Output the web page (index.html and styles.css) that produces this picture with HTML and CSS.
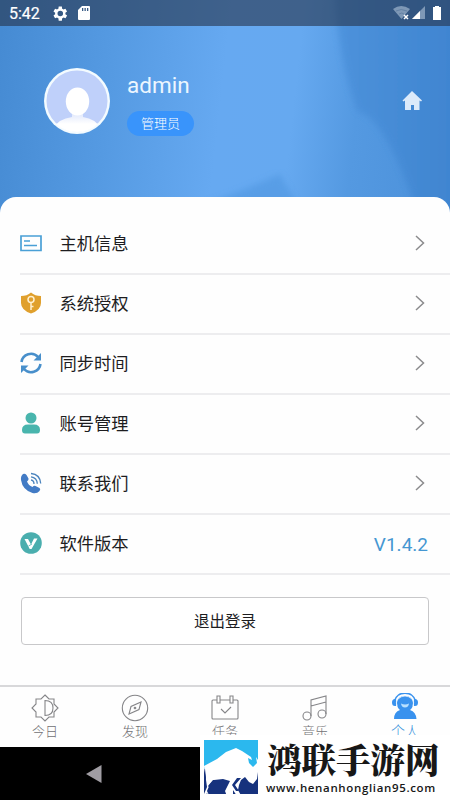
FILE: index.html
```
<!DOCTYPE html>
<html lang="zh-CN">
<head>
<meta charset="utf-8">
<title>个人</title>
<link rel="stylesheet" href="styles.css">
</head>
<body>
<div class="screen">
  <header class="hero">
    <svg class="hero-bg" viewBox="0 0 450 220" preserveAspectRatio="none">
      <defs>
        <linearGradient id="sky" gradientUnits="userSpaceOnUse" x1="0" y1="40" x2="450" y2="90"><stop offset="0" stop-color="#468bd3"/><stop offset=".25" stop-color="#559ae2"/><stop offset=".5" stop-color="#66a9f1"/><stop offset=".66" stop-color="#66a9f0"/><stop offset=".8" stop-color="#5499e1"/><stop offset="1" stop-color="#4c91da"/></linearGradient>
        <linearGradient id="wave" x1="0" x2="1"><stop offset="0" stop-color="#4a90da"/><stop offset="1" stop-color="#3c81cd"/></linearGradient>
        <filter id="soft"><feGaussianBlur stdDeviation="3"/></filter>
      </defs>
      <path fill="url(#sky)" d="M0 0h450v220H0z"/>
      <path filter="url(#soft)" fill="url(#wave)" opacity=".8" d="M335 -10Q339 65 358 112Q385 115 420 220H470V-10z"/>
      <path filter="url(#soft)" fill="#4f96e0" opacity=".6" d="M205 204Q250 188 280 174L306 220H205z"/>
    </svg>
    <div class="status">
      <span class="clock">5:42</span>
      <svg class="gear" viewBox="0 0 24 24"><path fill="#fff" fill-rule="evenodd" d="M19.400 13a7.800 7.800 0 0 0 0-2l2.100-1.600-2-3.500-2.500 1a7.500 7.500 0 0 0-1.700-1L15 3h-4l-.4 2.900a7.500 7.500 0 0 0-1.700 1l-2.500-1-2 3.500L6.500 11a7.800 7.800 0 0 0 0 2l-2.100 1.600 2 3.500 2.500-1a7.500 7.500 0 0 0 1.700 1L11 21h4l.4-2.900a7.500 7.500 0 0 0 1.700-1l2.500 1 2-3.500zM13 15.500a3.500 3.500 0 1 1 0-7 3.500 3.500 0 0 1 0 7z"/></svg>
      <svg class="sd" viewBox="0 0 12 14"><path fill="#fff" fill-rule="evenodd" d="M4 0h7q1 0 1 1v12q0 1-1 1H1q-1 0-1-1V4zM4 2v3h1.300V2zm2.500 0v3h1.300V2zM9 2v3h1.300V2z"/></svg>
      <svg class="signals" viewBox="0 0 50 16">
        <path fill="#7e98b6" d="M0 4Q8-2 17 4L8.500 14z"/><path stroke="#6482a5" fill="none" d="M3 6q5-3 11 0M6 9q3-2 5 0"/>
        <path stroke="#fff" stroke-width="1.500" d="M11 10l4 4m0-4l-4 4"/>
        <path fill="#7e98b6" d="M32 1v13H19z"/><path fill="#fff" d="M27 6v8h-8z"/>
        <path fill="#fff" d="M40 2h2V1h4v1h2v13h-8z"/>
      </svg>
    </div>
    <div class="profile">
      <svg class="avatar" viewBox="0 0 66 66">
        <defs><clipPath id="face"><circle cx="33" cy="33" r="31"/></clipPath><linearGradient id="body" x2="0" y2="1"><stop stop-color="#dce4fb"/><stop offset=".5" stop-color="#fff"/></linearGradient></defs>
        <circle cx="33" cy="33" r="33" fill="#f3fbff"/><circle cx="33" cy="33" r="30.500" fill="#bfd0fa"/>
        <g clip-path="url(#face)"><path fill="url(#body)" d="M28 44h11v5q13 2 17 11v8H10v-8q4-9 18-11z"/><ellipse cx="33.500" cy="33.500" rx="11.700" ry="14" fill="#fff"/></g>
      </svg>
      <div class="identity"><div class="name">admin</div><div class="role">管理员</div></div>
      <svg class="home" viewBox="0 0 20 20"><path fill="#dceafa" d="M10 0l10 9.500-1 1-1.500-1V19H12v-5H9v5H3V9.500l-1.500 1-1-1z"/></svg>
    </div>
  </header>

  <main class="card">
    <ul class="menu">
      <li><svg class="icon" viewBox="0 0 22 22"><path fill="none" stroke="#4aa0d6" stroke-width="1.700" d="M1 4h20v14.500H1zM4 9h6M4 13.500h13"/></svg><span>主机信息</span><svg class="arrow" viewBox="0 0 10 16"><path d="M1 1l7.500 7L1 15"/></svg></li>
      <li><svg class="icon" viewBox="0 0 22 22"><path fill="#e0a02d" d="M11 .5Q15 4 21 4v7q0 7-10 10.500Q1 18 1 11V4Q7 4 11 .5z"/><circle cx="11" cy="7.500" r="3" fill="none" stroke="#fff0d0" stroke-width="1.500"/><path fill="none" stroke="#fff0d0" stroke-width="1.500" d="M11 10.500V18M11 14.500h2.500"/></svg><span>系统授权</span><svg class="arrow" viewBox="0 0 10 16"><path d="M1 1l7.500 7L1 15"/></svg></li>
      <li><svg class="icon" viewBox="0 0 22 22"><g fill="none" stroke="#488fcb" stroke-width="2.600"><path d="M1.500 10A9.500 9.500 0 0 1 18 5"/><path d="M20.500 12A9.500 9.500 0 0 1 4 17"/></g><path fill="#488fcb" d="M21 1v7.500h-7.500zM1 21v-7.500h7.500z"/></svg><span>同步时间</span><svg class="arrow" viewBox="0 0 10 16"><path d="M1 1l7.500 7L1 15"/></svg></li>
      <li><svg class="icon" viewBox="0 0 22 22"><g fill="#49b5ad"><circle cx="11" cy="6" r="5.500"/><path d="M8 12.500h6q6 0 6 5.500 0 3.500-3 3.500H5q-3 0-3-3.500 0-5.500 6-5.500z"/></g></svg><span>账号管理</span><svg class="arrow" viewBox="0 0 10 16"><path d="M1 1l7.500 7L1 15"/></svg></li>
      <li><svg class="icon" viewBox="0 0 22 22"><path fill="#427bc5" d="M3 2Q5 1 6.500 3l2 3.500Q9 8 7 9.500q1.500 4 5.500 5.500 1.500-1.800 3-1l4 2q1.500 1 0 3-2.500 3-7 2Q2.500 18 1 8 .5 4 3 2z"/><path fill="none" stroke="#4a83bd" stroke-width="1.300" d="M11 8q3 .5 3 4M11 4.800q6 .7 6.300 7M11 1.500q9 .8 9.700 10"/></svg><span>联系我们</span><svg class="arrow" viewBox="0 0 10 16"><path d="M1 1l7.500 7L1 15"/></svg></li>
      <li><svg class="icon" viewBox="0 0 22 22"><circle cx="11" cy="11" r="10.800" fill="#4aaeae"/><path fill="#fff" d="M4.500 7H8l3 5.500L14 6.500h3.500L11.500 17H9.700z"/><path stroke="#4aaeae" stroke-width=".8" d="M8.500 14l3.500-2"/></svg><span>软件版本</span><b class="version">V1.4.2</b></li>
    </ul>
    <button class="logout">退出登录</button>
  </main>

  <nav class="tabs">
    <div class="tab"><svg viewBox="0 0 28 28"><path d="M14 1l4 4h5v5l4 4-4 4v5h-5l-4 4-4-4H5v-5l-4-4 4-4V5h5zM14 6.500q8 0 8 7.500t-8 7.500z"/></svg><span>今日</span></div>
    <div class="tab"><svg viewBox="0 0 28 28"><circle cx="14" cy="14" r="12.700"/><path d="M20 8l-2 7.500L8 20l2-7.500z"/><circle cx="14" cy="14" r=".8"/></svg><span>发现</span></div>
    <div class="tab"><svg viewBox="0 0 28 28"><path d="M6 6H2q-1 0-1 1v17q0 1 1 1h24q1 0 1-1V7q0-1-1-1h-4M9 6h10M6 2h3v7H6zM19 2h3v7h-3zM10 15l4 4 6-6"/></svg><span>任务</span></div>
    <div class="tab"><svg viewBox="0 0 28 28"><circle cx="6" cy="22" r="4"/><circle cx="21" cy="20" r="4"/><path d="M10 22V6l15-4v18M10 12l15-4"/></svg><span>音乐</span></div>
    <div class="tab active"><svg viewBox="0 0 28 28"><path class="fill" d="M14 3c5 0 8 3 8 7.500q0 4-3 6.500 6 2 6.500 9H3Q3 19 9 17q-3-2.500-3-6.500C6 6 9 3 14 3z"/><path class="band" d="M3.500 8C6-2.500 22-2.500 24.500 8"/><path class="fill" d="M5 6H4Q1 6 1 9.500T4 13h1zM23 6h1q3 0 3 3.500T24 13h-1z"/><path class="gap" d="M6 6Q4.800 9 6 13M22 6q1.200 3 0 7M7 6q7-6 14 0"/><path class="smile" d="M10 10.500q4 2 8 0-.5 4-4 4t-4-4z"/></svg><span>个人</span></div>
  </nav>

  <div class="system"><svg viewBox="0 0 16 18"><path fill="#a09da3" d="M0 9L15.500 0v18z"/></svg></div>

  <div class="watermark">
    <svg class="bison" viewBox="0 0 54 54">
      <path fill="#2bb8ee" d="M0 0h54v31H0z"/><path fill="#16327d" d="M0 29h54v25H0z"/>
      <path fill="#fff" d="M0 26L13 19 22 12 32 8l6 3 6 4 3 2 1 3-4-2 1 5 4 4 4-4-1-6 2 3v12l-1 7-4 5-4-2-4-5-4 3-2 5-1 5 5 9h-4l-6-9v9h-5l-3-8 5-10-7-2-9 1-4 4-3 7 4 8H6l-3-6-2 4-1-3 3-7z"/>
      <path fill="#16327d" d="M1 29l1 9-2 8zM13 40l-6 6 4 5H8l-4-5 5-6zM37 38l-6 7 4 6h-3l-4-6 5-7z"/>
    </svg>
    <div class="brand"><strong>鸿联手游网</strong><span>www.henanhonglian95.com</span></div>
  </div>
</div>
</body>
</html>
```
FILE: styles.css
```
* { box-sizing: border-box; }
body { margin: 0; font-family: Roboto, "Noto Sans CJK SC", sans-serif; color: #1d1d1f; }
svg { display: block; flex: none; }
.screen { position: relative; width: 450px; height: 800px; overflow: hidden; display: flex; flex-direction: column; background: #fefefe; }

.hero { position: relative; height: 197px; flex: none; }
.hero-bg { position: absolute; top: 0; left: 0; width: 450px; height: 220px; }
.status { position: relative; height: 26px; padding-left: 9px; display: flex; align-items: center; background: rgba(38, 54, 78, .62); }
.clock { width: 41px; font-size: 16px; font-weight: 400; line-height: 26px; padding-top: 2px; color: #fff; -webkit-text-stroke: .2px #fff; }
.gear { width: 19px; height: 19px; margin-right: 9px; }
.sd { width: 12px; height: 14px; }
.status .signals { width: 50px; height: 16px; margin: -1px 7px 0 auto; }
.profile { position: relative; display: flex; padding: 42px 28px 0 44px; }
.avatar { width: 66px; height: 66px; }
.identity { margin-left: 17px; padding-top: 3px; }
.name { font-size: 22.500px; line-height: 28px; color: #ecf6ff; font-weight: 400; }
.role { width: 67px; height: 25px; margin-top: 12px; border-radius: 13px; background: #3994fb; color: #fff; font-size: 13px; font-weight: 300; line-height: 25px; text-align: center; }
.home { width: 20px; height: 20px; margin: 23px 0 0 auto; }

.card { position: relative; height: 488px; flex: none; padding: 18px 0 0 20px; border-radius: 16px 16px 0 0; background: #fefefe; }
.menu { list-style: none; margin: 0; padding: 0; }
.menu li { display: flex; align-items: center; height: 60px; padding: 0 25px 2px 0; border-bottom: 2px solid #ededef; font-size: 17.300px; }
.menu li span { margin-top: -1px; }
.icon { width: 22px; height: 22px; margin-right: 17.500px; }
.arrow { width: 10px; height: 16px; margin-left: auto; fill: none; stroke: #8b8b8d; stroke-width: 1.500; }
.version { margin: 2px -3px 0 auto; font-size: 19px; font-weight: 400; color: #4597d2; }
.logout { display: block; width: 408px; height: 48px; margin: 22px 0 0 1px; padding: 0 0 2px; border: 1px solid #c8c8ca; border-radius: 4px; background: #fff; font: 15.500px "Noto Sans CJK SC", sans-serif; color: #1d1d1f; }

.tabs { display: grid; grid-template-columns: repeat(5, 1fr); height: 62px; flex: none; border-top: 2px solid #d8d8da; background: #fefefe; }
.tab { display: flex; flex-direction: column; align-items: center; padding-top: 7px; color: #707073; font-size: 13px; font-weight: 300; line-height: 20px; }
.tab svg { width: 28px; height: 28px; fill: none; stroke: #858588; stroke-width: 1.100; }
.tab.active { color: #3b94dc; font-size: 14px; padding-top: 6px; }
.tab.active svg { stroke: none; }
.tab .fill { fill: #3992ee; }
.tab .band { fill: none; stroke: #3992ee; stroke-width: 1.600; }
.tab .gap { fill: none; stroke: #d7ecff; stroke-width: .8; }
.tab .smile { fill: #b8e0ff; }
.system { flex: 1; display: flex; align-items: center; padding-left: 86px; background: #000; }
.system svg { width: 16px; height: 18px; }

.watermark { position: absolute; left: 200px; top: 735px; width: 250px; height: 65px; display: flex; padding: 5px 0 0 4px; background: #fff; }
.bison { width: 54px; height: 54px; }
.brand { display: flex; flex-direction: column; margin-left: 9px; color: #171717; }
.brand strong { font: 900 34.500px/37px "Noto Serif CJK SC", "Noto Sans CJK SC", serif; white-space: nowrap; }
.brand span { font: 600 11.500px/14px "Open Sans", sans-serif; letter-spacing: .65px; margin: 4px 0 0 -1px; }
```
